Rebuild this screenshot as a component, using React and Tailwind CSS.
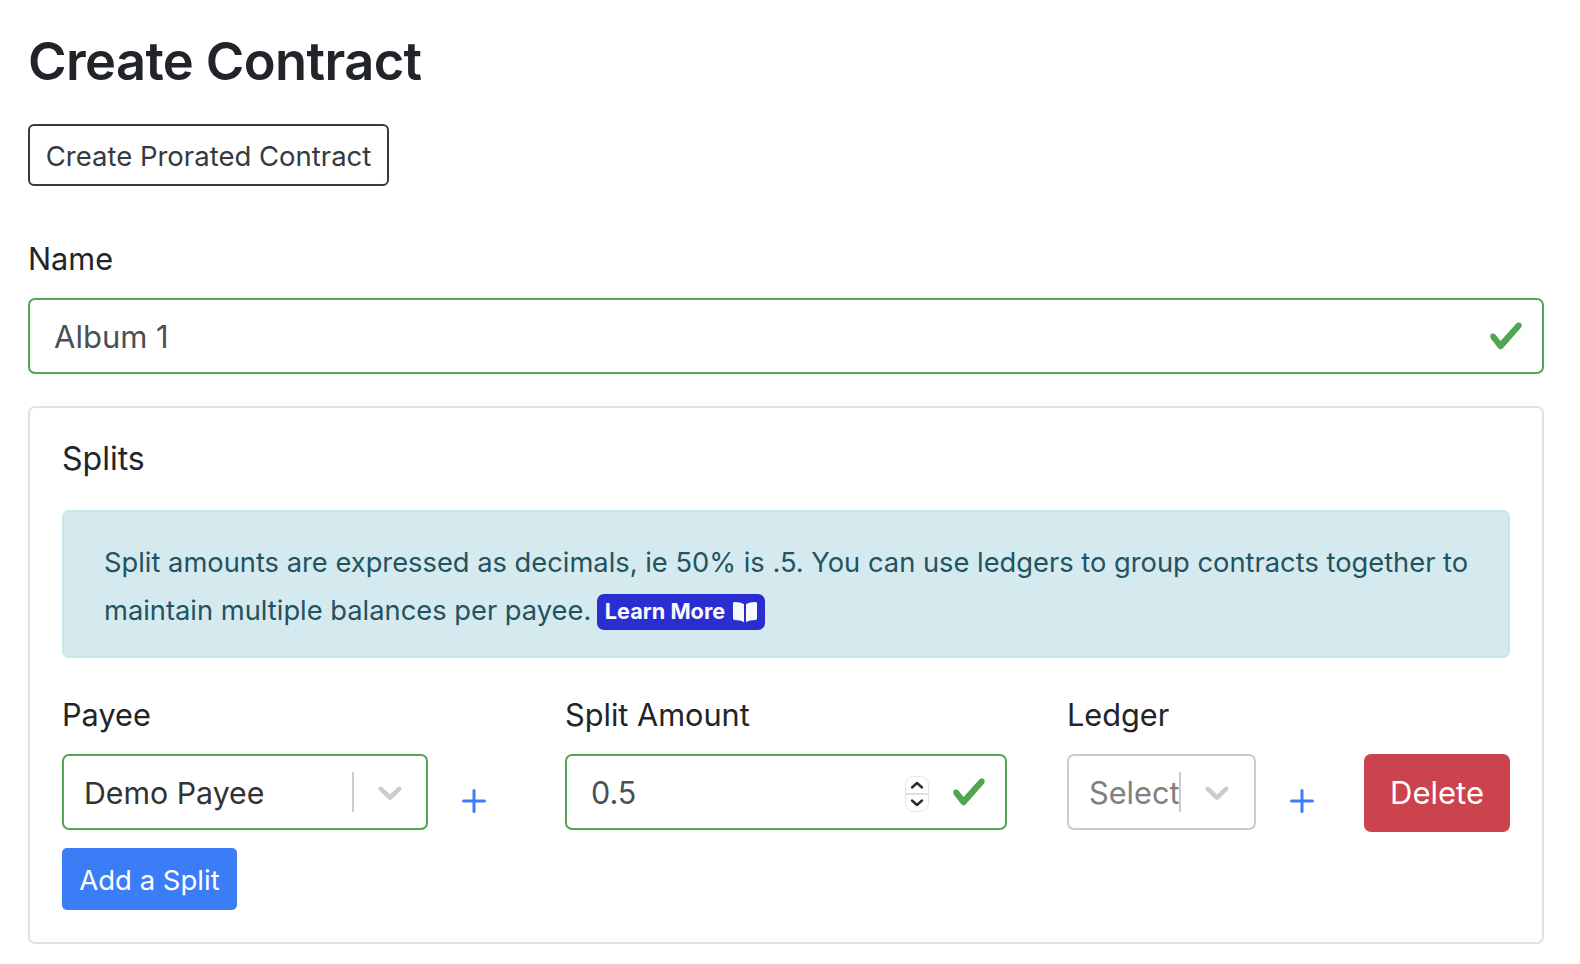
import React from 'react';

const Check = ({ className }) => (
    <svg viewBox="0 0 8 8" className={className} fill="#51a553">
        <path d="M2.3 6.73L.6 4.53c-.4-1.04.46-1.4 1.1-.8l1.1 1.4 3.4-3.8c.6-.63 1.6-.27 1.2.7l-4 4.6c-.43.5-.8.4-1.1.1z" />
    </svg>
);

const Chevron = () => (
    <svg viewBox="0 0 20 20" className="w-[40px] h-[40px]" fill="#cccccc">
        <path d="M4.516 7.548c0.436-0.446 1.043-0.481 1.576 0l3.908 3.747 3.908-3.747c0.533-0.481 1.141-0.446 1.574 0 0.436 0.445 0.408 1.197 0 1.615-0.406 0.418-4.695 4.502-4.695 4.502-0.217 0.223-0.502 0.335-0.787 0.335s-0.57-0.112-0.789-0.335c0 0-4.287-4.084-4.695-4.502s-0.436-1.17 0-1.615z" />
    </svg>
);

const PlusIcon = () => (
    <svg viewBox="0 0 24 24" className="w-[24px] h-[24px] mt-[35px]" fill="none" stroke="#3b7cf7" strokeWidth="3" strokeLinecap="round">
        <path d="M12 1.5v21M1.5 12h21" />
    </svg>
);

const Stepper = () => (
    <svg viewBox="0 0 24 36" className="w-[24px] h-[36px] mr-[22px] mt-[3px]" fill="none">
        <rect x="0.5" y="0.5" width="23" height="35" rx="8" fill="#ffffff" stroke="#e4e4e4" />
        <path d="M1 18h22" stroke="#d6d6d6" strokeWidth="1.5" />
        <path d="M7 11.5l5-4.5 5 4.5M7 24.5l5 4.5 5-4.5" stroke="#2b2b2b" strokeWidth="2.4" strokeLinecap="round" strokeLinejoin="round" />
    </svg>
);

const BookIcon = () => (
    <svg viewBox="0 0 24 22" className="h-[22px] w-[24px]" fill="#f8f9fa">
        <path d="M11 3.2v18c-2.4-1.5-5.6-2.2-9.4-2.2-.9 0-1.6-.6-1.6-1.4V2.4C0 1.6.7 1 1.6 1 5.4 1 8.6 1.7 11 3.2z" />
        <path d="M13 3.2v18c2.4-1.5 5.6-2.2 9.4-2.2.9 0 1.6-.6 1.6-1.4V2.4c0-.8-.7-1.4-1.6-1.4-3.8 0-7 .7-9.4 2.2z" />
    </svg>
);

const App = () => {
    return (
        <div className="min-h-[964px] bg-white pl-[28px] pr-[36px] pt-[28px] font-['Inter',sans-serif] text-[#212529]">
            <h1 className="text-[52.4px] leading-[66px] font-semibold tracking-[-0.6px]">Create Contract</h1>

            <button className="mt-[30px] block h-[62px] w-[361px] rounded-[6px] border-2 border-[#343a40] pt-[3px] text-[27.5px] text-[#343a40]">
                Create Prorated Contract
            </button>

            <label className="mt-[50px] block text-[30.7px] leading-[46px]">Name</label>
            <div className="mt-[16px] flex h-[76px] items-center justify-between rounded-[7px] border-2 border-[#51a553] pl-[24px] pr-[18px]">
                <span className="pt-[3px] text-[31px] text-[#495057]">Album 1</span>
                <Check className="h-[36px] w-[36px]" />
            </div>

            <div className="mt-[32px] h-[538px] rounded-[7px] border-2 border-[#dee2e6] px-[32px]">
                <h5 className="mt-[31px] text-[32px] leading-[40px]">Splits</h5>

                <div className="mt-[31px] h-[148px] rounded-[7px] border-2 border-[#c9e4ea] bg-[#d5eaef] pl-[40px] pr-[38px] pt-[27px] text-[27.3px] leading-[48px] text-[#22535f]">
                    Split amounts are expressed as decimals, ie 50% is .5. You can use ledgers to group contracts together to maintain multiple balances per payee.{' '}
                    <span className="-ml-[2px] inline-flex h-[36px] w-[168px] items-center justify-center gap-[8px] rounded-[7px] bg-[#2a2ed1] align-[1px] text-[21.7px] leading-none font-bold text-[#f8f9fa]">
                        Learn More <BookIcon />
                    </span>
                </div>

                <div className="mt-[34px] flex">
                    <div className="w-[503px]">
                        <label className="block text-[30.7px] leading-[46px]">Payee</label>
                        <div className="mt-[16px] flex items-start">
                            <div className="flex h-[76px] w-[366px] items-center rounded-[7px] border-2 border-[#51a553] pl-[20px] pr-[16px]">
                                <span className="flex-1 pt-[3px] text-[30.3px] text-[#333333]">Demo Payee</span>
                                <span className="mr-[16px] h-[40px] w-[2px] bg-[#cccccc]" />
                                <Chevron />
                            </div>
                            <div className="ml-[34px]"><PlusIcon /></div>
                        </div>
                    </div>

                    <div className="w-[502px]">
                        <label className="block text-[30.7px] leading-[46px]">Split Amount</label>
                        <div className="mt-[16px] flex h-[76px] w-[442px] items-center rounded-[7px] border-2 border-[#51a553] pl-[24px] pr-[18px]">
                            <span className="flex-1 pt-[2px] text-[30.5px] text-[#495057]">0.5</span>
                            <Stepper />
                            <Check className="h-[36px] w-[36px]" />
                        </div>
                    </div>

                    <div className="flex-1">
                        <label className="block text-[30.7px] leading-[46px]">Ledger</label>
                        <div className="mt-[16px] flex items-start">
                            <div className="flex h-[76px] w-[189px] items-center rounded-[7px] border-2 border-[#cccccc] pl-[20px]">
                                <span className="pt-[2px] text-[30.7px] text-[#808080]">Select</span>
                                <span className="h-[40px] w-[2px] bg-[#cccccc]" />
                                <span className="ml-[16px]"><Chevron /></span>
                            </div>
                            <div className="ml-[34px]"><PlusIcon /></div>
                            <button className="ml-[50px] h-[78px] w-[146px] rounded-[7px] bg-[#cb444d] pt-[1px] text-[31px] text-white">Delete</button>
                        </div>
                    </div>
                </div>

                <button className="mt-[16px] block h-[62px] w-[175px] rounded-[5px] bg-[#3b7cf7] pt-[3px] text-[27.5px] text-white">Add a Split</button>
            </div>
        </div>
    );
};

export default App;
